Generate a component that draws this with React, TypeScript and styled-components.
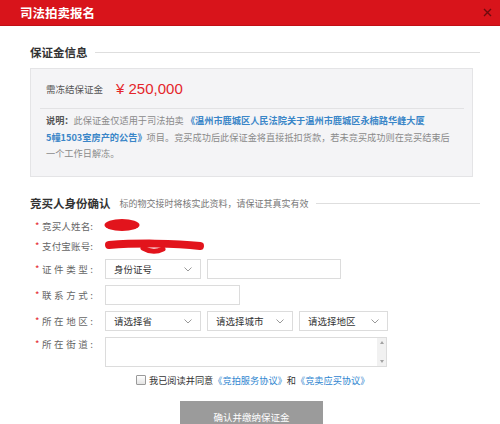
import React from "react";
import styled, { createGlobalStyle } from "styled-components";

const GlobalStyle = createGlobalStyle`
  html, body {
    margin: 0;
    padding: 0;
    background: #fff;
    overflow: hidden;
  }
  body {
    font-family: "Noto Sans CJK SC", "Noto Sans", sans-serif;
    color: #333;
  }
`;

const Chevron = () => (
  <svg width="8" height="5" viewBox="0 0 8 5">
    <path d="M0.5 0.5 L4 4 L7.5 0.5" stroke="#999" strokeWidth="1" fill="none" />
  </svg>
);

function Select({ label, width }: { label: string; width: number }) {
  return (
    <SelectBox $width={width}>
      <span>{label}</span>
      <Chevron />
    </SelectBox>
  );
}

function Field({
  label,
  top,
  children,
}: {
  label: string;
  top?: boolean;
  children?: React.ReactNode;
}) {
  return (
    <FieldRow $top={top}>
      <FieldLabel>
        <Star>*</Star>
        <LabelText>{label}:</LabelText>
      </FieldLabel>
      <FieldBody>{children}</FieldBody>
    </FieldRow>
  );
}

export default function App() {
  return (
    <>
      <GlobalStyle />
      <Header>
        <HeaderTitle>司法拍卖报名</HeaderTitle>
        <CloseButton>
          <svg width="9" height="9" viewBox="0 0 9 9">
            <path d="M1 1 L8 8 M8 1 L1 8" stroke="#6e0b0e" strokeWidth="1.4" />
          </svg>
        </CloseButton>
      </Header>

      <Content>
        <SectionHead $top={18}>
          <SectionTitle>保证金信息</SectionTitle>
          <SectionLine />
        </SectionHead>

        <DepositBox>
          <AmountRow>
            <AmountLabel>需冻结保证金</AmountLabel>
            <Amount>¥ 250,000</Amount>
          </AmountRow>
          <Divider />
          <Note>
            <NoteLabel>说明：</NoteLabel>此保证金仅适用于司法拍卖{" "}
            <NoteLink>《温州市鹿城区人民法院关于温州市鹿城区永楠路华峰大厦</NoteLink>
            <br />
            <NoteLink>5幢1503室房产的公告》</NoteLink>项目。竞买成功后此保证金将直接抵扣货款，若未竞买成功则在竞买结束后
            <br />
            一个工作日解冻。
          </Note>
        </DepositBox>

        <SectionHead $top={18}>
          <SectionTitle>竞买人身份确认</SectionTitle>
          <SectionHint>标的物交接时将核实此资料，请保证其真实有效</SectionHint>
          <SectionLine />
        </SectionHead>

        <Form>
          <Field label="竞买人姓名">
            <Scribble width="40" height="14" viewBox="0 0 40 14" $shift={-2}>
              <ellipse cx="19" cy="6" rx="17.5" ry="6" fill="#e2141c" />
            </Scribble>
          </Field>
          <Field label="支付宝账号">
            <Scribble width="100" height="14" viewBox="0 0 100 14" $shift={0}>
              <path
                d="M4 6 C 30 4, 70 4, 95 7"
                stroke="#e2141c"
                strokeWidth="8"
                strokeLinecap="round"
                fill="none"
              />
              <path
                d="M38 9 Q 48 15 58 10"
                stroke="#e2141c"
                strokeWidth="5"
                strokeLinecap="round"
                fill="none"
              />
            </Scribble>
          </Field>
          <Field label="证件类型">
            <Select label="身份证号" width={96} />
            <TextInput $width={134} />
          </Field>
          <Field label="联系方式">
            <TextInput $width={135} />
          </Field>
          <Field label="所在地区">
            <Select label="请选择省" width={96} />
            <Select label="请选择城市" width={86} />
            <Select label="请选择地区" width={89} />
          </Field>
          <Field label="所在街道" top>
            <TextArea>
              <ScrollRail>
                <Arrow $up />
                <Arrow />
              </ScrollRail>
            </TextArea>
          </Field>
        </Form>

        <AgreeRow>
          <CheckBox />
          <AgreeText>
            我已阅读并同意<AgreeLink>《竞拍服务协议》</AgreeLink>和
            <AgreeLink>《竞卖应买协议》</AgreeLink>
          </AgreeText>
        </AgreeRow>

        <SubmitButton>确认并缴纳保证金</SubmitButton>
      </Content>
    </>
  );
}

const Header = styled.div`
  height: 26px;
  background: #d8141b;
  border-bottom: 1px solid #c10f15;
  box-sizing: border-box;
  display: flex;
  align-items: center;
  justify-content: space-between;
  padding: 0 8px 0 20px;
`;

const HeaderTitle = styled.div`
  color: #fff;
  font-size: 12.5px;
  font-weight: 700;
`;

const CloseButton = styled.div`
  display: flex;
  align-items: center;
  cursor: pointer;
`;

const Content = styled.div`
  padding: 0 20px 0 30px;
`;

const SectionHead = styled.div<{ $top: number }>`
  display: flex;
  align-items: center;
  margin-top: ${(p) => p.$top}px;
  height: 16px;
`;

const SectionTitle = styled.div`
  font-size: 11.5px;
  font-weight: 700;
  color: #333;
`;

const SectionHint = styled.div`
  font-size: 9px;
  color: #777;
  margin-left: 9px;
`;

const SectionLine = styled.div`
  flex: 1;
  height: 1px;
  background: #dedede;
  margin-left: 7px;
`;

const DepositBox = styled.div`
  margin: 8px 7px 0 0;
  background: #f4f4f6;
  border: 1px solid #e4e4e6;
  height: 109px;
  box-sizing: border-box;
`;

const AmountRow = styled.div`
  display: flex;
  align-items: center;
  height: 39px;
  padding-left: 15px;
`;

const AmountLabel = styled.span`
  font-size: 9.5px;
  color: #555;
`;

const Amount = styled.span`
  font-family: "Liberation Sans", Arial, sans-serif;
  font-size: 15px;
  color: #e4262b;
  margin-left: 13px;
`;

const Divider = styled.div`
  height: 1px;
  background: #e2e2e4;
  margin: 0 8px 0 9px;
`;

const Note = styled.div`
  padding: 3px 10px 0 15px;
  font-size: 9.2px;
  line-height: 16.5px;
  color: #8a8a8a;
  white-space: nowrap;
`;

const NoteLabel = styled.span`
  color: #555;
  font-weight: 700;
`;

const NoteLink = styled.span`
  color: #3a86c8;
  font-weight: 700;
`;

const Form = styled.div`
  display: flex;
  flex-direction: column;
  gap: 6px;
  margin-top: 8px;
`;

const FieldRow = styled.div<{ $top?: boolean }>`
  display: flex;
  align-items: ${(p) => (p.$top ? "flex-start" : "center")};
  min-height: 14px;
`;

const FieldLabel = styled.div`
  width: 75px;
  flex: none;
  box-sizing: border-box;
  padding-left: 5px;
  display: flex;
  align-items: center;
  font-size: 9.5px;
  line-height: 14px;
  color: #666;
  white-space: nowrap;
`;

const Star = styled.span`
  width: 7px;
  color: #e4262b;
`;

const LabelText = styled.span`
  display: inline-block;
  width: 51px;
  text-align: justify;
  text-align-last: justify;
  white-space: nowrap;
`;

const FieldBody = styled.div`
  display: flex;
  align-items: center;
  gap: 6px;
`;

const Scribble = styled.svg<{ $shift: number }>`
  display: block;
  overflow: visible;
  margin-left: ${(p) => p.$shift}px;
`;

const SelectBox = styled.div<{ $width: number }>`
  width: ${(p) => p.$width}px;
  height: 20px;
  box-sizing: border-box;
  border: 1px solid #dcdcdc;
  background: #fff;
  display: flex;
  align-items: center;
  justify-content: space-between;
  padding: 0 8px 0 8px;
  font-size: 9.5px;
  color: #333;
`;

const TextInput = styled.div<{ $width: number }>`
  width: ${(p) => p.$width}px;
  height: 20px;
  box-sizing: border-box;
  border: 1px solid #dcdcdc;
  background: #fff;
`;

const TextArea = styled.div`
  width: 282px;
  height: 30px;
  box-sizing: border-box;
  border: 1px solid #dcdcdc;
  background: #fff;
  display: flex;
  justify-content: flex-end;
`;

const ScrollRail = styled.div`
  width: 9px;
  background: #f1f1f1;
  display: flex;
  flex-direction: column;
  justify-content: space-between;
  align-items: center;
  padding: 3px 0;
`;

const Arrow = styled.div<{ $up?: boolean }>`
  width: 0;
  height: 0;
  border-left: 2.5px solid transparent;
  border-right: 2.5px solid transparent;
  ${(p) =>
    p.$up ? "border-bottom: 3px solid #a3a3a3;" : "border-top: 3px solid #a3a3a3;"}
`;

const AgreeRow = styled.div`
  display: flex;
  align-items: center;
  margin-top: 6px;
  padding-left: 106px;
  height: 14px;
`;

const CheckBox = styled.div`
  width: 10px;
  height: 10px;
  box-sizing: border-box;
  border: 1px solid #9a9a9a;
  border-radius: 1px;
  background: linear-gradient(#fff, #e4e4e4);
  margin-right: 3px;
`;

const AgreeText = styled.span`
  font-size: 9.2px;
  color: #333;
`;

const AgreeLink = styled.span`
  color: #2f86d0;
`;

const SubmitButton = styled.div`
  margin: 14px 0 0 150px;
  width: 143px;
  height: 32px;
  background: #9b9b9b;
  color: #fff;
  font-size: 9.5px;
  display: flex;
  align-items: center;
  justify-content: center;
`;
